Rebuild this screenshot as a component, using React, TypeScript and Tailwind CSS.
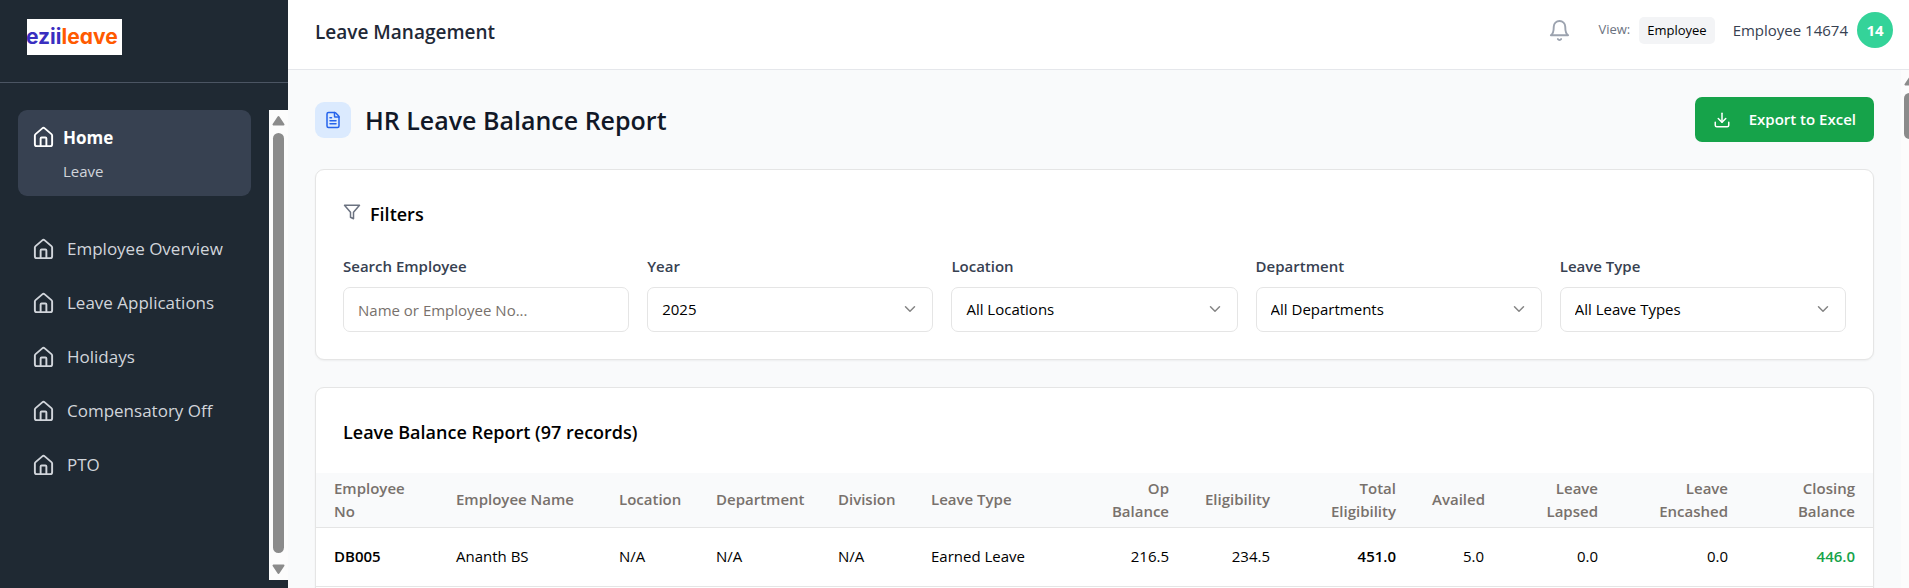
import type { ReactNode } from "react";
import { Download, FileText, House } from "lucide-react";

const navItems = ["Employee Overview", "Leave Applications", "Holidays", "Compensatory Off", "PTO"];

const filters = [
  { id: "year", label: "Year", options: ["2025", "2024"] },
  { id: "location", label: "Location", options: ["All Locations"] },
  { id: "department", label: "Department", options: ["All Departments"] },
  { id: "leave-type", label: "Leave Type", options: ["All Leave Types", "Earned Leave"] },
];

const columns = [
  { label: "Employee No", col: "w-[122px]", align: "text-left", cell: "font-semibold" },
  { label: "Employee Name", col: "w-[163px]", align: "text-left", cell: "" },
  { label: "Location", col: "w-[97px]", align: "text-left", cell: "" },
  { label: "Department", col: "w-[122px]", align: "text-left", cell: "" },
  { label: "Division", col: "w-[93px]", align: "text-left", cell: "" },
  { label: "Leave Type", col: "w-[165px]", align: "text-left", cell: "" },
  { label: "Op Balance", col: "w-[109px]", align: "text-right", cell: "" },
  { label: "Eligibility", col: "w-[101px]", align: "text-right", cell: "" },
  { label: "Total Eligibility", col: "w-[126px]", align: "text-right", cell: "font-semibold" },
  { label: "Availed", col: "w-[88px]", align: "text-right", cell: "" },
  { label: "Leave Lapsed", col: "w-[114px]", align: "text-right", cell: "" },
  { label: "Leave Encashed", col: "w-[130px]", align: "text-right", cell: "" },
  { label: "Closing Balance", col: "w-[127px]", align: "text-right", cell: "font-semibold text-[#16a34a]" },
];

const rows = [
  ["DB005", "Ananth BS", "N/A", "N/A", "N/A", "Earned Leave", "216.5", "234.5", "451.0", "5.0", "0.0", "0.0", "446.0"],
];

function BellIcon() {
  return (
    <svg viewBox="0 0 24 24" className="size-[23px]" fill="none" stroke="currentColor" strokeWidth="2" strokeLinecap="round" strokeLinejoin="round">
      <path d="M6 8a6 6 0 0 1 12 0c0 7 3 9 3 9H3s3-2 3-9" />
      <path d="M10.3 21a1.94 1.94 0 0 0 3.4 0" />
    </svg>
  );
}

function FilterIcon() {
  return (
    <svg viewBox="0 0 24 24" className="mb-1 size-[18px] text-[#6b7280]" fill="none" stroke="currentColor" strokeWidth="2" strokeLinecap="round" strokeLinejoin="round">
      <polygon points="22 3 2 3 10 12.46 10 19 14 21 14 12.46 22 3" />
    </svg>
  );
}

function Arrow({ down = false }: { down?: boolean }) {
  return (
    <svg viewBox="0 0 13 11" className="h-[11px] w-[13px] shrink-0" fill="#8b8b8b" stroke="#8b8b8b" strokeWidth="2" strokeLinejoin="round">
      <path d={down ? "M1.5 1.5h10L6.5 9z" : "M1.5 9.5h10L6.5 2z"} />
    </svg>
  );
}

function Card({ children }: { children: ReactNode }) {
  return <section className="overflow-hidden rounded-[9px] border border-[#e5e5e5] bg-white shadow-xs">{children}</section>;
}

function Sidebar() {
  return (
    <aside className="flex w-72 shrink-0 flex-col bg-[#1f2933] pb-2 text-[#d1d5db]">
      <div className="border-b border-[#4b5563] pt-[19px] pb-[27px] pl-[27px]">
        <div className="flex h-9 w-[95px] items-center overflow-hidden bg-white font-['Inter',sans-serif] text-[21px] font-bold [font-feature-settings:'cv11']">
          <span className="-ml-px text-[#3a2fc0]">ezii</span>
          <span className="text-[#ff5a00]">leave</span>
        </div>
      </div>
      <div className="mt-[27px] flex min-h-0 flex-1">
        <nav className="min-w-0 flex-1 overflow-hidden pr-[18px] pl-[18px]">
          <a href="#home" className="block h-[86px] rounded-[9px] bg-[#374151] px-[14px] pt-[14px] text-white">
            <span className="flex h-[27px] items-center gap-2">
              <House className="size-[23px]" strokeWidth={2} />
              <span className="text-[17px] font-bold">Home</span>
            </span>
            <span className="mt-2 block pl-[31px] text-[15px] leading-6 text-[#d1d5db]">Leave</span>
          </a>
          <ul className="mt-[26px]">
            {navItems.map((item) => (
              <li key={item}>
                <a href="#section" className="flex h-[54px] items-center gap-3 px-[14px] text-[17px]">
                  <House className="size-[23px]" strokeWidth={2} />
                  {item}
                </a>
              </li>
            ))}
          </ul>
        </nav>
        <div className="flex w-[19px] flex-col items-center gap-[7px] bg-[#fcfcfc] py-[5px]">
          <Arrow />
          <div className="w-[11px] flex-1 rounded-full bg-[#8b8b8b]" />
          <div className="pt-1">
            <Arrow down />
          </div>
        </div>
      </div>
    </aside>
  );
}

function Header() {
  return (
    <header className="flex h-[70px] shrink-0 items-start justify-between border-b border-[#e5e7eb] bg-white pt-3 pr-4 pl-[27px]">
      <h2 className="text-[19px] leading-10 font-semibold text-[#1f2937]">Leave Management</h2>
      <div className="flex h-9 items-center">
        <button aria-label="Notifications" className="text-[#9ca3af]">
          <BellIcon />
        </button>
        <span className="ml-[27px] text-[13px] text-[#6b7280]">View:</span>
        <span className="ml-[9px] rounded-[5px] bg-[#f3f4f6] px-2 text-[13px] leading-[27px] text-black">Employee</span>
        <span className="ml-[18px] text-[15px] text-[#374151]">Employee 14674</span>
        <span className="ml-[9px] flex size-9 items-center justify-center rounded-full bg-[#34d399] text-[15px] font-bold text-white">14</span>
      </div>
    </header>
  );
}

function Filters() {
  return (
    <Card>
      <div className="px-[27px] pt-[30px] pb-[27px]">
        <h3 className="flex h-7 items-center gap-[9px] text-[18px] font-semibold text-black">
          <FilterIcon />
          Filters
        </h3>
        <div className="mt-[26px] grid grid-cols-5 gap-[18px] text-[15px]">
          <div>
            <label htmlFor="search" className="block leading-6 font-semibold text-[#374151]">Search Employee</label>
            <input id="search" placeholder="Name or Employee No..." className="mt-[9px] h-[45px] w-full rounded-[7px] border border-[#e5e5e5] px-[14px] placeholder:text-[#78716c]" />
          </div>
          {filters.map((filter) => (
            <div key={filter.id}>
              <label htmlFor={filter.id} className="block leading-6 font-semibold text-[#374151]">{filter.label}</label>
              <div className="relative mt-[9px]">
                <select id={filter.id} className="h-[45px] w-full appearance-none rounded-[7px] border border-[#e5e5e5] bg-white px-[14px] text-black">
                  {filter.options.map((option) => (
                    <option key={option}>{option}</option>
                  ))}
                </select>
                <svg viewBox="0 0 24 24" className="pointer-events-none absolute top-[13px] right-[14px] size-[18px] text-[#858585]" fill="none" stroke="currentColor" strokeWidth="2" strokeLinecap="round" strokeLinejoin="round">
                  <path d="m6 9 6 6 6-6" />
                </svg>
              </div>
            </div>
          ))}
        </div>
      </div>
    </Card>
  );
}

function Report() {
  return (
    <Card>
      <h3 className="px-[27px] pt-[30px] pb-[27px] text-[18px] leading-7 font-semibold text-black">Leave Balance Report (97 records)</h3>
      <table className="w-full table-fixed text-[15px]">
        <colgroup>
          {columns.map((column) => (
            <col key={column.label} className={column.col} />
          ))}
        </colgroup>
        <thead>
          <tr className="h-[54px] border-b border-[#e5e5e5] bg-[#f9fafb]">
            {columns.map((column) => (
              <th key={column.label} scope="col" className={`px-[18px] leading-[23px] font-semibold text-[#78716c] ${column.align}`}>
                {column.label}
              </th>
            ))}
          </tr>
        </thead>
        <tbody>
          {rows.map((row) => (
            <tr key={row[0]} className="h-[59px] border-b border-[#e5e5e5] text-black">
              {row.map((value, i) => (
                <td key={columns[i].label} className={`px-[18px] ${columns[i].align} ${columns[i].cell}`}>
                  {value}
                </td>
              ))}
            </tr>
          ))}
          <tr className="h-[59px]">
            <td colSpan={13} />
          </tr>
        </tbody>
      </table>
    </Card>
  );
}

export default function App() {
  return (
    <div className="flex h-screen overflow-hidden bg-[#f9fafb] font-['Open_Sans','Noto_Sans',sans-serif]">
      <Sidebar />
      <div className="flex min-w-0 flex-1 flex-col">
        <Header />
        <div className="flex min-h-0 flex-1">
          <main className="min-w-0 flex-1 space-y-[27px] overflow-hidden p-[27px]">
            <div className="flex items-center justify-between">
              <div className="flex items-center gap-[14px]">
                <span className="flex size-9 items-center justify-center rounded-[9px] bg-[#dbeafe] text-[#2563eb]">
                  <FileText className="size-[18px]" />
                </span>
                <h1 className="text-[25px] leading-9 font-semibold text-[#111827]">HR Leave Balance Report</h1>
              </div>
              <button className="flex h-[45px] items-center gap-[18px] rounded-[7px] bg-[#16a34a] px-[18px] text-[15px] font-semibold text-white">
                <Download className="size-[18px]" />
                Export to Excel
              </button>
            </div>
            <Filters />
            <Report />
          </main>
          <div className="flex w-2 flex-col gap-[7px] overflow-hidden bg-[#fcfcfc] pt-[5px] pl-[3px]">
            <Arrow />
            <div className="h-[46px] w-[11px] rounded-full bg-[#8b8b8b]" />
          </div>
        </div>
      </div>
    </div>
  );
}
